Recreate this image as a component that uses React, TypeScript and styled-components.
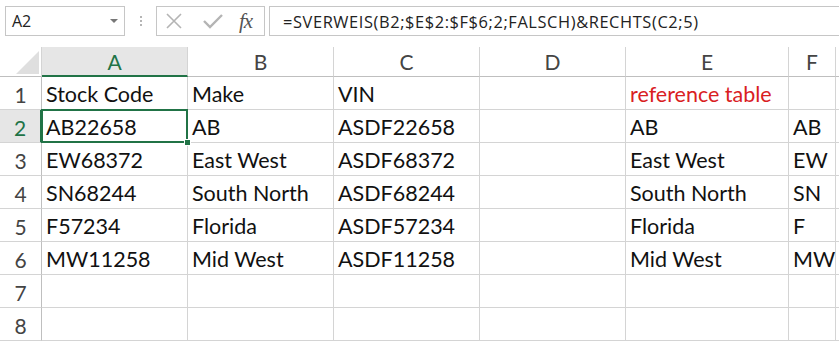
import { Fragment } from 'react';
import styled, { createGlobalStyle } from 'styled-components';

const GlobalStyle = createGlobalStyle`
  html, body {
    margin: 0;
    padding: 0;
    background: #ffffff;
    overflow: hidden;
  }
  body {
    font-family: Lato, "Open Sans", sans-serif;
  }
`;

const green = '#217346';
const line = '#d4d4d4';

const Page = styled.div`
  width: 839px;
  height: 346px;
  overflow: hidden;
  background: #fff;
`;

const Toolbar = styled.div`
  display: flex;
  align-items: center;
  height: 30px;
  padding: 6px 0 0 5px;
  margin-bottom: 11px;
`;

const NameBox = styled.div`
  box-sizing: border-box;
  width: 120px;
  height: 30px;
  border: 1px solid #c6c6c6;
  display: flex;
  align-items: center;
  justify-content: space-between;
  padding: 0 6px 0 6px;
  font-family: "Open Sans", sans-serif;
  font-size: 16px;
  color: #222;
`;

const Caret = styled.span`
  width: 0;
  height: 0;
  border-left: 4px solid transparent;
  border-right: 4px solid transparent;
  border-top: 4px solid #777;
`;

const Grip = styled.div`
  width: 31px;
  display: flex;
  flex-direction: column;
  align-items: center;
  gap: 2px;
  span {
    width: 2px;
    height: 2px;
    background: #b5b5b5;
  }
`;

const ButtonBox = styled.div`
  box-sizing: border-box;
  width: 109px;
  height: 30px;
  border: 1px solid #c6c6c6;
  display: flex;
  align-items: center;
  padding-left: 8px;
  gap: 20px;
`;

const Fx = styled.span`
  font-family: "Liberation Serif", serif;
  font-style: italic;
  font-size: 21px;
  color: #555;
  margin-left: -4px;
  letter-spacing: -1px;
`;

const FormulaBox = styled.div`
  box-sizing: border-box;
  flex: 1;
  height: 30px;
  margin-left: 4px;
  border-top: 1px solid #c6c6c6;
  border-bottom: 1px solid #c6c6c6;
  border-left: 1px solid #c6c6c6;
  display: flex;
  align-items: center;
  padding-left: 13px;
  font-family: "Open Sans", sans-serif;
  font-size: 16.4px;
  letter-spacing: 0.6px;
  color: #222;
  white-space: nowrap;
`;

const Sheet = styled.div`
  display: grid;
  grid-template-columns: 42px 146px 146px 146px 146px 163px 47px 1fr;
  grid-template-rows: 30px repeat(8, 33px);
`;

const Corner = styled.div`
  box-sizing: border-box;
  border-right: 1px solid ${line};
  border-bottom: 1px solid #bfbfbf;
  position: relative;
  &::after {
    content: '';
    position: absolute;
    right: 2px;
    bottom: 2px;
    width: 0;
    height: 0;
    border-left: 23px solid transparent;
    border-bottom: 23px solid #dfdfdf;
  }
`;

const ColHead = styled.div<{ $active?: boolean }>`
  box-sizing: border-box;
  display: flex;
  align-items: center;
  justify-content: center;
  font-size: 21px;
  color: ${p => (p.$active ? green : '#444')};
  background: ${p => (p.$active ? '#e6e6e6' : '#fff')};
  border-right: 1px solid ${line};
  border-bottom: ${p => (p.$active ? `2px solid ${green}` : '1px solid #bfbfbf')};
`;

const RowHead = styled.div<{ $active?: boolean }>`
  box-sizing: border-box;
  display: flex;
  align-items: center;
  justify-content: center;
  padding-top: 2px;
  font-size: 21px;
  color: ${p => (p.$active ? green : '#444')};
  background: ${p => (p.$active ? '#e6e6e6' : '#fff')};
  border-right: ${p => (p.$active ? `2px solid ${green}` : `1px solid #bfbfbf`)};
  border-bottom: 1px solid ${line};
`;

const Cell = styled.div<{ $red?: boolean; $selected?: boolean }>`
  box-sizing: border-box;
  position: relative;
  display: flex;
  align-items: center;
  padding: 2px 0 0 4px;
  font-size: 21.5px;
  color: ${p => (p.$red ? '#d9201f' : '#111')};
  white-space: nowrap;
  overflow: visible;
  border-right: 1px solid ${line};
  border-bottom: 1px solid ${line};
  ${p =>
    p.$selected &&
    `
    z-index: 1;
    &::before {
      content: '';
      position: absolute;
      left: -1px;
      top: -1px;
      right: -1px;
      bottom: -1px;
      border: 2px solid ${green};
    }
    &::after {
      content: '';
      position: absolute;
      right: -4px;
      bottom: -4px;
      width: 5px;
      height: 5px;
      background: ${green};
      border: 1px solid #fff;
    }
  `}
`;

const columns = ['A', 'B', 'C', 'D', 'E', 'F', ''];

const rows: string[][] = [
  ['Stock Code', 'Make', 'VIN', '', 'reference table', '', ''],
  ['AB22658', 'AB', 'ASDF22658', '', 'AB', 'AB', ''],
  ['EW68372', 'East West', 'ASDF68372', '', 'East West', 'EW', ''],
  ['SN68244', 'South North', 'ASDF68244', '', 'South North', 'SN', ''],
  ['F57234', 'Florida', 'ASDF57234', '', 'Florida', 'F', ''],
  ['MW11258', 'Mid West', 'ASDF11258', '', 'Mid West', 'MW', ''],
  ['', '', '', '', '', '', ''],
  ['', '', '', '', '', '', ''],
];

export default function App() {
  return (
    <Page>
      <GlobalStyle />
      <Toolbar>
        <NameBox>
          A2
          <Caret />
        </NameBox>
        <Grip>
          <span />
          <span />
          <span />
        </Grip>
        <ButtonBox>
          <svg width="18" height="18" viewBox="0 0 18 18">
            <path d="M2 2 L16 16 M16 2 L2 16" stroke="#b4b4b4" strokeWidth="1.6" fill="none" />
          </svg>
          <svg width="20" height="16" viewBox="0 0 20 16">
            <path d="M1 8 L7 14 L19 2" stroke="#b4b4b4" strokeWidth="2.4" fill="none" />
          </svg>
          <Fx>fx</Fx>
        </ButtonBox>
        <FormulaBox>=SVERWEIS(B2;$E$2:$F$6;2;FALSCH)&amp;RECHTS(C2;5)</FormulaBox>
      </Toolbar>
      <Sheet>
        <Corner />
        {columns.map((c, i) => (
          <ColHead key={i} $active={c === 'A'}>
            {c}
          </ColHead>
        ))}
        {rows.map((r, ri) => (
          <Fragment key={ri}>
            <RowHead $active={ri === 1}>{ri + 1}</RowHead>
            {r.map((v, ci) => (
              <Cell key={ci} $red={ri === 0 && ci === 4} $selected={ri === 1 && ci === 0}>
                {v}
              </Cell>
            ))}
          </Fragment>
        ))}
      </Sheet>
    </Page>
  );
}
